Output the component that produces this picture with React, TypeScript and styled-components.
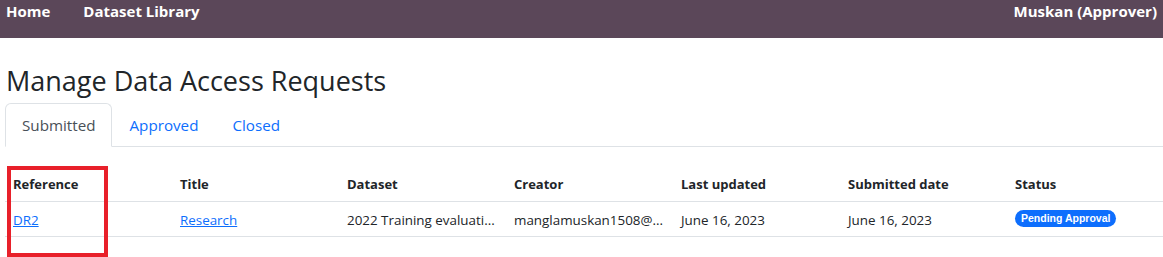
import React from "react";
import styled, { createGlobalStyle } from "styled-components";

const GlobalStyle = createGlobalStyle`
  body {
    margin: 0;
    font-family: "Open Sans", "Noto Sans", sans-serif;
    color: #212529;
    background: #fff;
    overflow: hidden;
  }
`;

const Page = styled.div`
  position: relative;
  width: 1163px;
  height: 257px;
`;

const NavBar = styled.nav`
  height: 38px;
  background: #5b4759;
  display: flex;
  align-items: flex-start;
  padding: 2px 6px 0 6px;
  box-sizing: border-box;
`;

const NavLink = styled.a<{ $right?: boolean }>`
  color: #fff;
  font-weight: 700;
  font-size: 15px;
  line-height: 18px;
  text-decoration: none;
  margin-right: 33px;
  ${(p) => (p.$right ? "margin-left: auto; margin-right: 0;" : "")}
`;

const Content = styled.main`
  padding: 0 0 0 5px;
`;

const Heading = styled.h3`
  margin: 26px 0 0 1px;
  font-size: 27px;
  font-weight: 500;
  line-height: 34px;
`;

const Tabs = styled.ul`
  list-style: none;
  margin: 5px 0 0 0;
  padding: 0;
  display: flex;
  border-bottom: 1px solid #dee2e6;
`;

const Tab = styled.li<{ $active?: boolean }>`
  margin-bottom: -1px;
  padding: 10px 16px 10px;
  font-size: 15.2px;
  line-height: 22px;
  border: 1px solid ${(p) => (p.$active ? "#dee2e6" : "transparent")};
  border-bottom-color: ${(p) => (p.$active ? "#fff" : "transparent")};
  border-radius: 6px 6px 0 0;
  color: ${(p) => (p.$active ? "#495057" : "#0d6efd")};
  background: ${(p) => (p.$active ? "#fff" : "transparent")};
`;

const Table = styled.table`
  margin-top: 20px;
  border-collapse: collapse;
  table-layout: fixed;
  width: 1169px;
  font-size: 13.4px;
`;

const Th = styled.th`
  text-align: left;
  font-weight: 700;
  font-size: 13px;
  padding: 8px;
  line-height: 18px;
  border-bottom: 1px solid #dee2e6;
`;

const Td = styled.td`
  padding: 9px 8px 7px;
  line-height: 18px;
  border-bottom: 1px solid #dee2e6;
  white-space: nowrap;
`;

const Link = styled.a`
  color: #0d6efd;
  text-decoration: underline;
`;

const Badge = styled.span`
  display: inline-block;
  vertical-align: top;
  margin-top: -1px;
  background: #0d6efd;
  color: #fff;
  font-family: "Liberation Sans", Arial, sans-serif;
  font-weight: 700;
  font-size: 10.5px;
  line-height: 17px;
  padding: 0 6px;
  border-radius: 9px;
`;

const Highlight = styled.div`
  position: absolute;
  left: 7px;
  top: 166px;
  width: 101px;
  height: 91px;
  border: 4px solid #e8202a;
  box-sizing: border-box;
  pointer-events: none;
`;

const columns = [
  "Reference",
  "Title",
  "Dataset",
  "Creator",
  "Last updated",
  "Submitted date",
  "Status",
];

const truncate = (s: string, n: number) =>
  s.length > n ? s.slice(0, n) + "..." : s;

const request = {
  ref: "DR2",
  title: "Research",
  dataset: "2022 Training evaluation dataset",
  creator: "manglamuskan1508@gmail.com",
  updated: "June 16, 2023",
  submitted: "June 16, 2023",
  status: "Pending Approval",
};

export default function App() {
  return (
    <Page>
      <GlobalStyle />
      <NavBar>
        <NavLink>Home</NavLink>
        <NavLink>Dataset Library</NavLink>
        <NavLink $right>Muskan (Approver)</NavLink>
      </NavBar>
      <Content>
        <Heading>Manage Data Access Requests</Heading>
        <Tabs>
          <Tab $active>Submitted</Tab>
          <Tab>Approved</Tab>
          <Tab>Closed</Tab>
        </Tabs>
        <Table>
          <thead>
            <tr>
              {columns.map((c) => (
                <Th key={c}>{c}</Th>
              ))}
            </tr>
          </thead>
          <tbody>
            <tr>
              <Td>
                <Link>{request.ref}</Link>
              </Td>
              <Td>
                <Link>{request.title}</Link>
              </Td>
              <Td title={request.dataset}>{truncate(request.dataset, 22)}</Td>
              <Td title={request.creator}>{truncate(request.creator, 17)}</Td>
              <Td>{request.updated}</Td>
              <Td>{request.submitted}</Td>
              <Td>
                <Badge>{request.status}</Badge>
              </Td>
            </tr>
          </tbody>
        </Table>
      </Content>
      <Highlight />
    </Page>
  );
}
